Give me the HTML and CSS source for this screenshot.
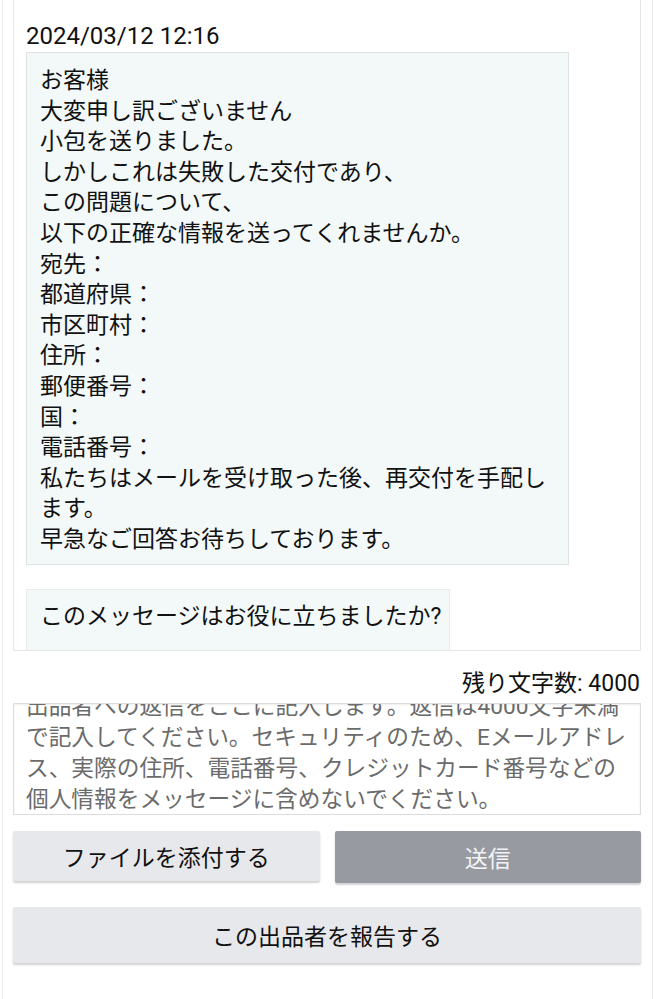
FILE: index.html
```html
<!DOCTYPE html>
<html lang="ja">
<head>
    <meta charset="UTF-8">
    <meta name="viewport" content="width=device-width, initial-scale=1.0">
    <title>メッセージ</title>
    <link rel="stylesheet" href="styles.css">
</head>
<body>
    <div class="page">
        <div class="thread">
            <div class="msg-date">2024/03/12 12:16</div>
            <div class="bubble">お客様
大変申し訳ございません
小包を送りました。
しかしこれは失敗した交付であり、
この問題について、
以下の正確な情報を送ってくれませんか。
宛先：
都道府県：
市区町村：
住所：
郵便番号：
国：
電話番号：
私たちはメールを受け取った後、再交付を手配します。
早急なご回答お待ちしております。</div>
            <div class="feedback">このメッセージはお役に立ちましたか?</div>
        </div>

        <div class="counter">残り文字数: 4000</div>

        <div class="reply-box">
            <div class="placeholder">出品者への返信をここに記入します。返信は4000文字未満で記入してください。セキュリティのため、Eメールアドレス、実際の住所、電話番号、クレジットカード番号などの個人情報をメッセージに含めないでください。</div>
        </div>

        <div class="actions">
            <button class="btn">ファイルを添付する</button>
            <button class="btn btn-send">送信</button>
        </div>
        <button class="btn btn-report">この出品者を報告する</button>
    </div>
</body>
</html>
```

FILE: styles.css
```css
* {
    box-sizing: border-box;
    margin: 0;
    padding: 0;
}

body {
    font-family: Roboto, "Noto Sans CJK JP", sans-serif;
    font-size: 23px;
    color: #111;
    background-color: white;
}

.page {
    margin-left: 2px;
    min-height: 999px;
    border-left: 1px solid #ebebeb;
    border-right: 1px solid #ebebeb;
    padding: 0 11px 0 10px;
}

.thread {
    height: 651px;
    overflow: hidden;
    border: 1px solid #e6e6e6;
    border-top: none;
    padding: 22px 12px 0;
}

.msg-date {
    font-size: 24px;
    line-height: 28px;
    margin-bottom: 2px;
}

.bubble {
    width: 543px;
    white-space: pre-line;
    line-height: 30.6px;
    background-color: #f3f8f8;
    border: 1px solid #dfe3e3;
    padding: 13px 13px 8px;
}

.feedback {
    width: 424px;
    margin-top: 24px;
    white-space: nowrap;
    background-color: #f3f8f8;
    border: 1px solid #e6eaea;
    padding: 12px 13px 40px;
    line-height: 30px;
}

.counter {
    text-align: right;
    line-height: 30px;
    margin: 18px 1px 0 0;
}

.reply-box {
    height: 112px;
    margin-top: 4px;
    overflow: hidden;
    border: 1px solid #dcdcdc;
    box-shadow: inset 0 1px 2px rgba(0, 0, 0, 0.08);
    padding: 0 6px 0 12px;
}

.placeholder {
    color: #6b6b6b;
    font-size: 22.7px;
    line-height: 31px;
    margin-top: -13px;
}

.actions {
    display: flex;
    gap: 15px;
    margin-top: 16px;
}

.btn {
    flex: 1;
    height: 50px;
    font-family: inherit;
    font-size: 23px;
    color: #111;
    background-color: #e7e8eb;
    border: none;
    border-radius: 2px;
    box-shadow: 0 2px 2px rgba(0, 0, 0, 0.18);
}

.btn-send {
    height: 52px;
    color: #f4f4f4;
    background-color: #979aa1;
}

.btn-report {
    display: block;
    width: 100%;
    height: 56px;
    margin-top: 24px;
}
```
